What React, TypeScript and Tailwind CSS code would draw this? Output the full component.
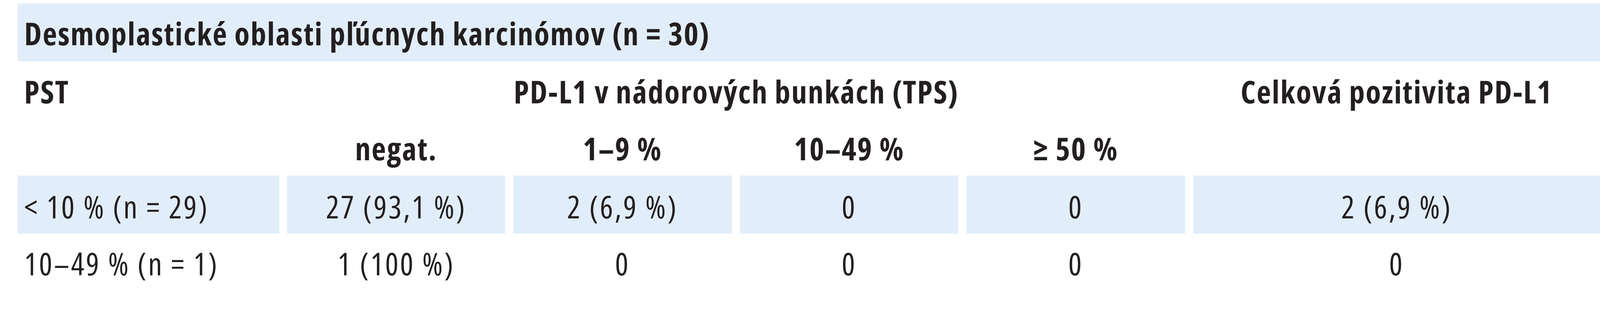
const rows = [
  ["< 10 % (n = 29)", "27 (93,1 %)", "2 (6,9 %)", "0", "0", "2 (6,9 %)"],
  ["10–49 % (n = 1)", "1 (100 %)", "0", "0", "0", "0"],
]

export default function App() {
  return (
    <div
      className="min-h-[800px] w-full bg-white pl-[1.1%] pt-[9px] text-[80px] leading-none font-stretch-semi-condensed tracking-[0.05em] text-[#231f20]"
      style={{ fontFamily: '"Open Sans", "Noto Sans", sans-serif' }}
    >
      <div className="grid grid-cols-[775fr_645fr_648fr_647fr_648fr_1205fr] gap-x-[0.51%]">
        {/* title */}
        <div className="col-span-6 flex h-[148px] items-center bg-[#e1eef9] pl-[0.42%] pt-[3px] font-bold tracking-[0.03em]">
          Desmoplastické oblasti pľúcnych karcinómov (n = 30)
        </div>

        {/* header row 1 */}
        <div className="flex h-[148px] items-center pl-[2.5%] pt-[5px] font-bold tracking-[0.03em]">PST</div>
        <div className="col-span-4 flex h-[148px] items-center justify-center pt-[5px] font-bold tracking-[0.03em]">
          PD-L1 v nádorových bunkách (TPS)
        </div>
        <div className="flex h-[148px] items-center justify-center pt-[5px] font-bold tracking-[0.03em]">
          Celková pozitivita PD-L1
        </div>

        {/* header row 2 */}
        <div className="h-[145px]" />
        <div className="flex h-[145px] items-center justify-center pt-[5px] font-bold tracking-[0.03em]">negat.</div>
        <div className="flex h-[145px] items-center justify-center pt-[5px] font-bold tracking-[0.03em]">1–9 %</div>
        <div className="flex h-[145px] items-center justify-center pt-[5px] font-bold tracking-[0.03em]">10–49 %</div>
        <div className="flex h-[145px] items-center justify-center pt-[5px] font-bold tracking-[0.03em]">≥ 50 %</div>
        <div className="h-[145px]" />

        {/* body */}
        {rows.map((row, i) =>
          row.map((cell, j) => (
            <div
              key={`${i}-${j}`}
              className={`flex h-[149px] items-center ${i === 0 ? "bg-[#e1eef9] pt-[9px]" : "pt-[3px]"} ${
                j === 0 ? "pl-[2.5%]" : "justify-center"
              }`}
            >
              {cell}
            </div>
          ))
        )}
      </div>
    </div>
  )
}
